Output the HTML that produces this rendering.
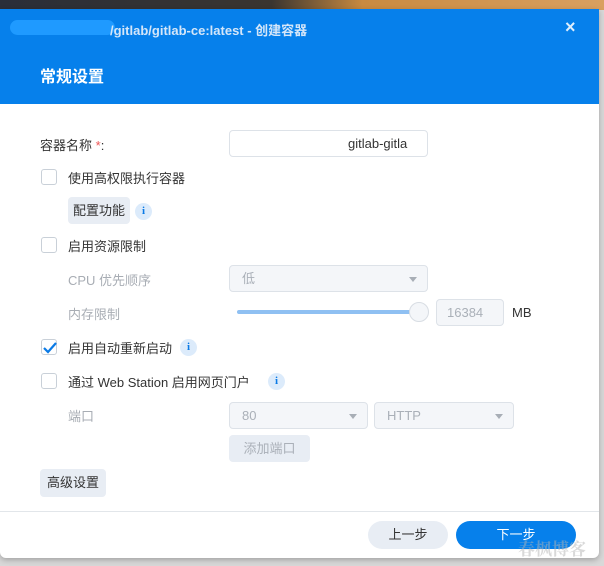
<!DOCTYPE html>
<html><head><meta charset="utf-8"><style>
*{box-sizing:border-box;margin:0;padding:0}
body{width:604px;height:566px;overflow:hidden;background:#d8d8d8;font-family:"Liberation Sans","Noto Sans CJK SC",sans-serif;font-size:13px;color:#333;position:relative}
.top{position:absolute;left:0;top:0;width:604px;height:10px;background:linear-gradient(90deg,#2a2e38 0%,#3a3530 45%,#c98a40 60%,#d9a060 100%)}
.dlg{position:absolute;left:0;top:9px;width:599px;height:549px;background:#fff;border-radius:0 0 6px 6px;overflow:hidden;box-shadow:0 2px 6px rgba(0,0,0,.25)}
.hd{position:absolute;left:0;top:0;width:599px;height:95px;background:#0680eb}
.a{position:absolute;white-space:nowrap}
.cb{position:absolute;width:16px;height:16px;border:1px solid #c9d0d8;border-radius:3px;background:#fff}
.btn{position:absolute;background:#e8edf4;border-radius:4px;text-align:center;color:#333}
.sel{position:absolute;background:#f4f6f9;border:1px solid #dde2e8;border-radius:4px;color:#aab0b8;padding-left:12px}
.dd:after{content:"";position:absolute;right:10px;top:11px;border:4px solid transparent;border-top:5px solid #a8aeb6}
.info{position:absolute;width:17px;height:17px;border-radius:50%;background:#dcebfb;color:#0a7ae6;font-weight:bold;font-size:11px;text-align:center;line-height:17px;font-family:"Liberation Serif",serif}
.g{color:#a8adb4}
</style></head><body>
<div class="top"></div>
<div class="dlg">
<div class="hd">
 <div class="a" style="left:10px;top:11px;width:105px;height:15px;border-radius:8px;background:#1f9aff"></div>
 <div class="a" style="left:110px;top:11px;color:#d4e6f9;font-weight:bold;font-size:13px">/gitlab/gitlab-ce:latest - 创建容器</div>
 <div class="a" style="left:565px;top:8px;color:#dfeefc;font-size:18px;font-weight:bold">×</div>
 <div class="a" style="left:40px;top:54px;color:#fff;font-size:16px;font-weight:bold">常规设置</div>
</div>
<div class="a" style="left:40px;top:126px">容器名称 <span style="color:#e55">*</span>:</div>
<div class="a" style="left:229px;top:121px;width:199px;height:27px;border:1px solid #dde2e8;border-radius:4px;padding:5px 0 0 118px">gitlab-gitla</div>
<div class="cb" style="left:41px;top:160px"></div><div class="a" style="left:68px;top:159px">使用高权限执行容器</div>
<div class="btn" style="left:68px;top:188px;width:62px;height:27px;line-height:27px">配置功能</div>
<div class="info" style="left:135px;top:194px">i</div>
<div class="cb" style="left:41px;top:228px"></div><div class="a" style="left:68px;top:227px">启用资源限制</div>
<div class="a g" style="left:68px;top:261px">CPU 优先顺序</div>
<div class="sel dd" style="left:229px;top:256px;width:199px;height:27px;line-height:25px">低</div>
<div class="a g" style="left:68px;top:295px">内存限制</div>
<div class="a" style="left:237px;top:301px;width:182px;height:4px;border-radius:2px;background:#8fc0f2"></div>
<div class="a" style="left:409px;top:293px;width:20px;height:20px;border-radius:50%;background:#f4f6f9;border:1px solid #d8dde3"></div>
<div class="sel" style="left:436px;top:290px;width:68px;height:27px;line-height:25px;padding-left:10px">16384</div>
<div class="a" style="left:512px;top:296px">MB</div>
<div class="cb" style="left:41px;top:330px"></div>
<svg class="a" style="left:42px;top:332px" width="16" height="14"><path d="M2 7 L6 11 L14 2" stroke="#0a7ae6" stroke-width="2.2" fill="none"/></svg>
<div class="a" style="left:68px;top:329px">启用自动重新启动</div>
<div class="info" style="left:180px;top:330px">i</div>
<div class="cb" style="left:41px;top:364px"></div><div class="a" style="left:68px;top:363px">通过 Web Station 启用网页门户</div>
<div class="info" style="left:268px;top:364px">i</div>
<div class="a g" style="left:68px;top:397px">端口</div>
<div class="sel dd" style="left:229px;top:393px;width:139px;height:27px;line-height:25px">80</div>
<div class="sel dd" style="left:374px;top:393px;width:140px;height:27px;line-height:25px">HTTP</div>
<div class="btn g" style="left:229px;top:426px;width:81px;height:27px;line-height:27px;color:#aab0b8">添加端口</div>
<div class="btn" style="left:40px;top:460px;width:66px;height:28px;line-height:28px">高级设置</div>
<div class="a" style="left:0;top:502px;width:599px;height:1px;background:#e2e6ea"></div>
<div class="btn" style="left:368px;top:512px;width:80px;height:28px;line-height:28px;border-radius:14px">上一步</div>
<div class="btn" style="left:456px;top:512px;width:120px;height:28px;line-height:28px;border-radius:14px;background:#0680eb;color:#fff">下一步</div>
</div>
<div class="a" style="left:518px;top:535px;color:rgba(180,180,180,.5);font-size:17px;font-weight:bold;font-family:'Noto Serif CJK SC',serif">春枫博客</div>
</body></html>
